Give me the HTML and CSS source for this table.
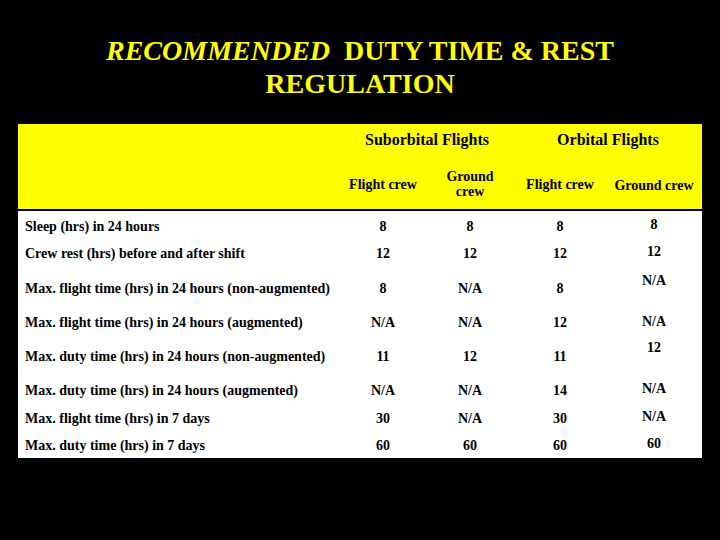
FILE: index.html
```html
<!DOCTYPE html>
<html>
<head>
<meta charset="utf-8">
<link rel="stylesheet" href="styles.css">
</head>
<body>
<div class="slide">
  <h1 class="title"><em>RECOMMENDED</em>&nbsp; DUTY TIME &amp; REST<br>REGULATION</h1>
  <table class="grid">
    <colgroup>
      <col class="c-label"><col class="c-v1"><col class="c-v2"><col class="c-v3"><col class="c-v4">
    </colgroup>
    <thead>
      <tr class="h-top">
        <th></th>
        <th colspan="2">Suborbital Flights</th>
        <th colspan="2">Orbital Flights</th>
      </tr>
      <tr class="h-sub">
        <th></th>
        <th>Flight crew</th>
        <th class="two">Ground<br>crew</th>
        <th>Flight crew</th>
        <th class="gc">Ground crew</th>
      </tr>
    </thead>
    <tbody>
      <tr class="r1"><td>Sleep (hrs) in 24 hours</td><td>8</td><td>8</td><td>8</td><td class="last">8</td></tr>
      <tr class="r2"><td>Crew rest (hrs) before and after shift</td><td>12</td><td>12</td><td>12</td><td class="last">12</td></tr>
      <tr class="r3"><td>Max. flight time (hrs) in 24 hours (non-augmented)</td><td>8</td><td>N/A</td><td>8</td><td class="last">N/A</td></tr>
      <tr class="r4"><td>Max. flight time (hrs) in 24 hours (augmented)</td><td>N/A</td><td>N/A</td><td>12</td><td class="last">N/A</td></tr>
      <tr class="r5"><td>Max. duty time (hrs) in 24 hours (non-augmented)</td><td>11</td><td>12</td><td>11</td><td class="last">12</td></tr>
      <tr class="r6"><td>Max. duty time (hrs) in 24 hours (augmented)</td><td>N/A</td><td>N/A</td><td>14</td><td class="last">N/A</td></tr>
      <tr class="r7"><td>Max. flight time (hrs) in 7 days</td><td>30</td><td>N/A</td><td>30</td><td class="last">N/A</td></tr>
      <tr class="r8"><td>Max. duty time (hrs) in 7 days</td><td>60</td><td>60</td><td>60</td><td class="last">60</td></tr>
    </tbody>
  </table>
</div>
</body>
</html>
```
FILE: styles.css
```css
html, body {
  margin: 0;
  padding: 0;
  background: #000;
}
.slide {
  width: 720px;
  height: 540px;
  background: #000;
  font-family: "Liberation Serif", "Times New Roman", serif;
  overflow: hidden;
}
.title {
  margin: 0;
  height: 124px;
  box-sizing: border-box;
  padding-top: 34px;
  text-align: center;
  color: #ffff00;
  font-family: "Liberation Serif", "Times New Roman", serif;
  font-weight: bold;
  font-size: 28px;
  line-height: 33px;
}
.title em {
  font-style: italic;
}
.grid {
  margin-left: 18px;
  width: 684px;
  border-collapse: separate;
  border-spacing: 0;
  table-layout: fixed;
  font-family: "Liberation Serif", "Times New Roman", serif;
  font-size: 14px;
  font-weight: bold;
  color: #000;
}
.c-label { width: 322px; }
.c-v1 { width: 86px; }
.c-v2 { width: 88px; }
.c-v3 { width: 92px; }
.c-v4 { width: 96px; }
.grid thead {
  background: #ffff00;
}
.grid th {
  font-weight: bold;
  padding: 0;
  text-align: center;
  vertical-align: top;
  box-sizing: border-box;
}
.h-top { height: 33px; }
.h-top th {
  font-size: 16px;
  line-height: 18px;
  padding-top: 7px;
  height: 33px;
}
.h-sub { height: 54px; }
.h-sub th {
  font-size: 14px;
  line-height: 15px;
  padding-top: 20px;
  height: 54px;
  border-bottom: 2px solid #000;
}
.h-sub th.two {
  padding-top: 12px;
}
.h-sub th.gc {
  padding-top: 21px;
}
.grid tbody {
  background: #fff;
}
.grid td {
  padding: 0;
  text-align: center;
  vertical-align: top;
  line-height: 16px;
  box-sizing: border-box;
}
.grid td:first-child {
  text-align: left;
  padding-left: 7px;
}
.r1 td { height: 29px; padding-top: 8px; }
.r2 td { height: 28px; padding-top: 6px; }
.r3 td { height: 38px; padding-top: 13px; }
.r4 td { height: 33px; padding-top: 9px; }
.r5 td { height: 34px; padding-top: 10px; }
.r6 td { height: 32px; padding-top: 10px; }
.r7 td { height: 27px; padding-top: 6px; }
.r8 td { height: 26px; padding-top: 6px; }
.r1 td.last { padding-top: 6px; }
.r2 td.last { padding-top: 4px; }
.r3 td.last { padding-top: 5px; }
.r4 td.last { padding-top: 8px; }
.r5 td.last { padding-top: 1px; }
.r6 td.last { padding-top: 8px; }
.r7 td.last { padding-top: 4px; }
.r8 td.last { padding-top: 4px; }
```
